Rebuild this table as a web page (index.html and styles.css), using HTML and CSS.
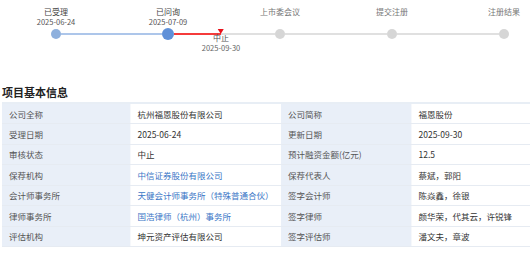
FILE: index.html
```html
<!DOCTYPE html>
<html lang="zh-CN">
<head>
    <meta charset="UTF-8">
    <meta name="viewport" content="width=device-width, initial-scale=1.0">
    <title>项目基本信息</title>
    <link rel="stylesheet" href="styles.css">
</head>
<body>
    <div class="progress">
        <div class="step done">
            <div class="step-name">已受理</div>
            <div class="step-date">2025-06-24</div>
            <div class="step-node">
                <span class="line line-none"></span>
                <span class="dot"></span>
                <span class="line line-done"></span>
            </div>
        </div>
        <div class="step current">
            <div class="step-name">已问询</div>
            <div class="step-date">2025-07-09</div>
            <div class="step-node">
                <span class="line line-done"></span>
                <span class="dot"></span>
                <span class="line line-halt"></span>
            </div>
            <div class="halt">
                <span class="halt-mark"></span>
                <div class="halt-name">中止</div>
                <div class="halt-date">2025-09-30</div>
            </div>
        </div>
        <div class="step">
            <div class="step-name">上市委会议</div>
            <div class="step-date"></div>
            <div class="step-node">
                <span class="line"></span>
                <span class="dot"></span>
                <span class="line"></span>
            </div>
        </div>
        <div class="step">
            <div class="step-name">提交注册</div>
            <div class="step-date"></div>
            <div class="step-node">
                <span class="line"></span>
                <span class="dot"></span>
                <span class="line"></span>
            </div>
        </div>
        <div class="step">
            <div class="step-name">注册结果</div>
            <div class="step-date"></div>
            <div class="step-node">
                <span class="line"></span>
                <span class="dot"></span>
                <span class="line line-none"></span>
            </div>
        </div>
    </div>

    <h2 class="section-title">项目基本信息</h2>

    <table class="info-table">
        <colgroup>
            <col class="col-label1">
            <col class="col-value1">
            <col class="col-label2">
            <col class="col-value2">
        </colgroup>
        <tr>
            <td class="label">公司全称</td>
            <td>杭州福恩股份有限公司</td>
            <td class="label">公司简称</td>
            <td>福恩股份</td>
        </tr>
        <tr>
            <td class="label">受理日期</td>
            <td>2025-06-24</td>
            <td class="label">更新日期</td>
            <td>2025-09-30</td>
        </tr>
        <tr>
            <td class="label">审核状态</td>
            <td>中止</td>
            <td class="label">预计融资金额(亿元)</td>
            <td>12.5</td>
        </tr>
        <tr>
            <td class="label">保荐机构</td>
            <td><a href="#" class="org-link">中信证券股份有限公司</a></td>
            <td class="label">保荐代表人</td>
            <td>蔡斌，郭阳</td>
        </tr>
        <tr>
            <td class="label">会计师事务所</td>
            <td><a href="#" class="org-link">天健会计师事务所（特殊普通合伙）</a></td>
            <td class="label">签字会计师</td>
            <td>陈焱鑫，徐银</td>
        </tr>
        <tr>
            <td class="label">律师事务所</td>
            <td><a href="#" class="org-link">国浩律师（杭州）事务所</a></td>
            <td class="label">签字律师</td>
            <td>颜华荣，代其云，许锐锋</td>
        </tr>
        <tr>
            <td class="label">评估机构</td>
            <td>坤元资产评估有限公司</td>
            <td class="label">签字评估师</td>
            <td>潘文夫，章波</td>
        </tr>
    </table>
</body>
</html>
```

FILE: styles.css
```css
* {
    margin: 0;
    padding: 0;
    box-sizing: border-box;
}

body {
    font-family: "Noto Sans CJK SC", "Noto Sans", sans-serif;
    background: #ffffff;
    color: #333;
    width: 530px;
    overflow: hidden;
}

/* progress bar */
.progress {
    display: flex;
    height: 84px;
    padding-top: 7px;
    overflow: hidden;
}

.step {
    flex: none;
    width: 112px;
    display: flex;
    flex-direction: column;
    align-items: center;
    position: relative;
}

.step-name {
    font-size: 8px;
    line-height: 10px;
    height: 10px;
    color: #777;
    white-space: nowrap;
}

.done .step-name,
.current .step-name {
    color: #444;
}

.step-date {
    font-size: 7.5px;
    line-height: 10px;
    height: 10px;
    color: #555;
}

.step-node {
    width: 100%;
    height: 12px;
    margin-top: 1px;
    display: flex;
    align-items: center;
}

.line {
    flex: 1;
    height: 2px;
    background: #e0e0e0;
}

.line-none { background: transparent; }
.line-done { background: #adc6ea; }
.line-halt { background: linear-gradient(to right, #f53b3b 47px, #e0e0e0 47px); }

.dot {
    width: 10px;
    height: 10px;
    border-radius: 50%;
    background: #d6d6d6;
}

.done .dot {
    background: #8eb0dd;
}

.current .dot {
    width: 12px;
    height: 12px;
    background: #5f90d8;
}

.halt {
    position: absolute;
    top: 22px;
    left: 109px;
    transform: translateX(-50%);
    display: flex;
    flex-direction: column;
    align-items: center;
    white-space: nowrap;
}

.halt-mark {
    width: 0;
    height: 0;
    border-top: 5px solid #e8101a;
    border-left: 3px solid transparent;
    border-right: 3px solid transparent;
}

.halt-name {
    font-size: 8px;
    line-height: 10px;
    color: #555;
    margin-top: -1px;
}

.halt-date {
    font-size: 7.5px;
    line-height: 10px;
    color: #666;
}

/* info table */
.section-title {
    font-size: 11px;
    line-height: 16px;
    font-weight: bold;
    color: #222;
    padding-left: 2px;
    margin-bottom: 2px;
}

.info-table {
    margin-left: 2px;
    width: 528px;
    border-collapse: collapse;
    table-layout: fixed;
    border-top: 2px solid #e8eef5;
    font-size: 8.5px;
}

.col-label1 { width: 128px; }
.col-value1 { width: 151px; }
.col-label2 { width: 130px; }
.col-value2 { width: 119px; }

.info-table td {
    height: 20.5px;
    border-bottom: 1px solid #e6ebf2;
    padding: 0 7px;
    color: #333;
    white-space: nowrap;
    vertical-align: middle;
}

.info-table td.label {
    background: #e9eff8;
    color: #555;
    border-right: 1px solid #f6f8fb;
}

.org-link {
    color: #3a76c6;
    text-decoration: none;
}
```
